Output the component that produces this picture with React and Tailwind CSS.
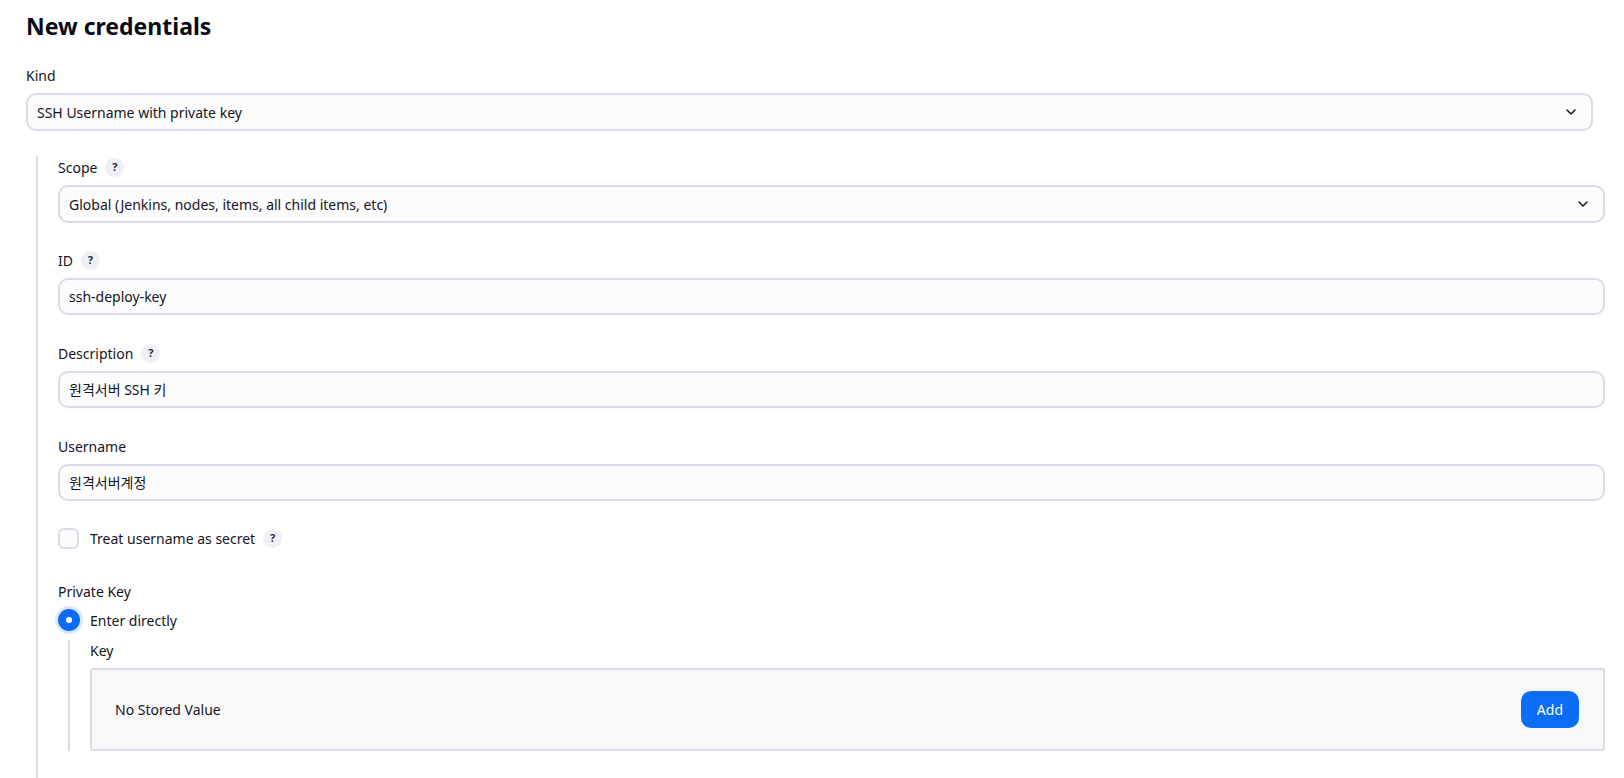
import { ChevronDown } from "lucide-react";

const font = { fontFamily: '"Noto Sans", "Noto Sans CJK KR", sans-serif' };

function Help() {
  return (
    <span className="ml-2 inline-flex h-[19px] w-[19px] items-center justify-center rounded-full bg-[#eef0f5] text-[11px] font-bold text-[#2c2c38]">
      ?
    </span>
  );
}

function Label({ children, help }) {
  return (
    <div className="flex h-5 items-center text-[14px] text-[#14141f]">
      {children}
      {help && <Help />}
    </div>
  );
}

function Select({ value }) {
  return (
    <div className="mt-2 flex h-[38px] items-center justify-between rounded-[10px] border-2 border-[#d7dce6] bg-[#fcfcfd] pl-[9px] pr-[12px] text-[14px] text-[#14141f]">
      <span>{value}</span>
      <ChevronDown size={16} strokeWidth={2.25} className="text-[#14141f]" />
    </div>
  );
}

function Input({ value }) {
  return (
    <div className="mt-2 flex h-[37px] items-center rounded-[10px] border-2 border-[#d7dce6] bg-[#fcfcfd] pl-[9px] text-[14px] text-[#14141f]">
      {value}
    </div>
  );
}

export default function App() {
  return (
    <div className="min-h-[778px] bg-white pl-[26px] pr-[31px] text-[#14141f]" style={font}>
      <h1 className="pt-[10px] text-[23px] font-bold leading-[32px] text-[#0a0a14]">New credentials</h1>

      <div className="mt-[23px]">
        <Label>Kind</Label>
        <Select value="SSH Username with private key" />
      </div>

      <div className="-mr-[12px] ml-[10px] mt-[25px] border-l-2 border-[#d7dce6] pl-[20px]">
        <div className="pt-px">
          <Label help>Scope</Label>
          <Select value="Global (Jenkins, nodes, items, all child items, etc)" />
        </div>

        <div className="mt-[27px]">
          <Label help>ID</Label>
          <Input value="ssh-deploy-key" />
        </div>

        <div className="mt-[28px]">
          <Label help>Description</Label>
          <Input value="원격서버 SSH 키" />
        </div>

        <div className="mt-[28px]">
          <Label>Username</Label>
          <Input value="원격서버계정" />
        </div>

        <div className="mt-[27px] flex items-center">
          <span className="h-[21px] w-[21px] rounded-[6px] border-2 border-[#d7dce6] bg-[#fcfcfd]" />
          <span className="ml-[11px] text-[14px]">Treat username as secret</span>
          <Help />
        </div>

        <div className="mt-[32px]">
          <Label>Private Key</Label>
          <div className="mt-[8px] flex items-center">
            <span className="flex h-[22px] w-[22px] items-center justify-center rounded-full bg-[#0b6cf5] ring-[3px] ring-[#dbe8fc]">
              <span className="h-[6px] w-[6px] rounded-full bg-white" />
            </span>
            <span className="ml-[10px] text-[14px]">Enter directly</span>
          </div>
          <div className="ml-[10px] mt-[9px] border-l-2 border-[#d7dce6] pl-[20px]">
            <Label>Key</Label>
            <div className="mt-[8px] flex h-[83px] items-center justify-between rounded-[3px] border-2 border-[#d7dce6] bg-[#f8f8f8] pl-[23px] pr-[24px]">
              <span className="text-[14px]">No Stored Value</span>
              <button className="h-[37px] rounded-[10px] bg-[#0b6cf5] px-[16px] text-[14px] text-white">Add</button>
            </div>
          </div>
        </div>
        <div className="h-[30px]" />
      </div>
    </div>
  );
}
